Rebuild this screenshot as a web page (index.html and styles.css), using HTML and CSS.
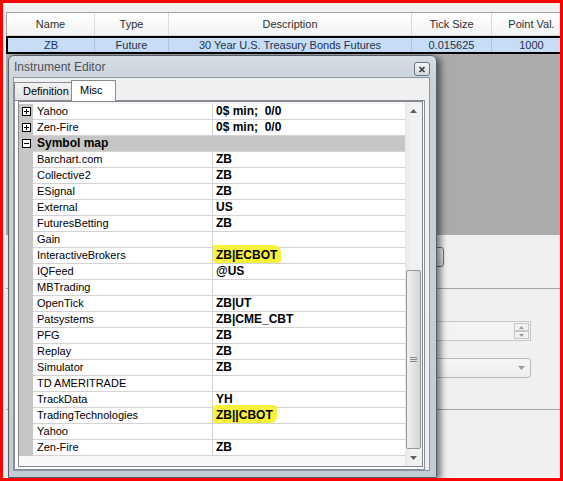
FILE: index.html
```html
<!DOCTYPE html>
<html>
<head>
<meta charset="utf-8">
<link rel="stylesheet" href="styles.css">
</head>
<body>
<div class="screen">
  <div class="list">
    <div class="lrow head">
      <div class="c c1">Name</div><div class="c c2">Type</div><div class="c c3">Description</div><div class="c c4">Tick Size</div><div class="c c5">Point Val.</div>
    </div>
    <div class="lrow sel">
      <div class="c c1">ZB</div><div class="c c2">Future</div><div class="c c3">30 Year U.S. Treasury Bonds Futures</div><div class="c c4">0.015625</div><div class="c c5">1000</div>
    </div>
  </div>
  <div class="gray"></div>
  <div class="lower">
    <div class="btn"></div>
    <div class="sep"></div>
    <div class="spin">
      <div class="spin-btns">
        <span class="sb"><svg width="5" height="3" viewBox="0 0 5 3"><polygon points="0,3 2.5,0 5,3" fill="#9a9a9a"/></svg></span>
        <span class="sb"><svg width="5" height="3" viewBox="0 0 5 3"><polygon points="0,0 2.5,3 5,0" fill="#9a9a9a"/></svg></span>
      </div>
    </div>
    <div class="combo"><svg width="7" height="4" viewBox="0 0 7 4"><polygon points="0,0 3.5,4 7,0" fill="#9c9c9c"/></svg></div>
    <div class="sep sep2"></div>
  </div>

  <div class="dialog">
    <div class="titlebar">
      <span class="title">Instrument Editor</span>
      <span class="close"><svg width="8" height="7" viewBox="0 0 8 7"><path d="M1.5 1 L6.5 6 M6.5 1 L1.5 6" stroke="#3a3a3a" stroke-width="1.6"/></svg></span>
    </div>
    <div class="client">
      <div class="tabs">
        <div class="tab">Definition</div>
        <div class="tab active">Misc</div>
      </div>
      <div class="panel">
        <div class="pgrid">
          <div class="rows">
            <div class="prow"><div class="gut"><svg class="exp" width="9" height="9" viewBox="0 0 9 9"><rect x="0.5" y="0.5" width="8" height="8" fill="#fff" stroke="#000"/><path d="M2 4.5h5M4.5 2v5" stroke="#000"/></svg></div><div class="cells"><div class="lab">Yahoo</div><div class="val">0$ min;&nbsp; 0/0</div></div></div>
            <div class="prow"><div class="gut"><svg class="exp" width="9" height="9" viewBox="0 0 9 9"><rect x="0.5" y="0.5" width="8" height="8" fill="#fff" stroke="#000"/><path d="M2 4.5h5M4.5 2v5" stroke="#000"/></svg></div><div class="cells"><div class="lab">Zen-Fire</div><div class="val">0$ min;&nbsp; 0/0</div></div></div>
            <div class="prow cat"><div class="gut"><svg class="exp" width="9" height="9" viewBox="0 0 9 9"><rect x="0.5" y="0.5" width="8" height="8" fill="#fff" stroke="#000"/><path d="M2 4.5h5" stroke="#000"/></svg></div><div class="cells"><div class="catlab">Symbol map</div></div></div>
            <div class="prow"><div class="gut"></div><div class="cells"><div class="lab">Barchart.com</div><div class="val">ZB</div></div></div>
            <div class="prow"><div class="gut"></div><div class="cells"><div class="lab">Collective2</div><div class="val">ZB</div></div></div>
            <div class="prow"><div class="gut"></div><div class="cells"><div class="lab">ESignal</div><div class="val">ZB</div></div></div>
            <div class="prow"><div class="gut"></div><div class="cells"><div class="lab">External</div><div class="val">US</div></div></div>
            <div class="prow"><div class="gut"></div><div class="cells"><div class="lab">FuturesBetting</div><div class="val">ZB</div></div></div>
            <div class="prow"><div class="gut"></div><div class="cells"><div class="lab">Gain</div><div class="val"></div></div></div>
            <div class="prow"><div class="gut"></div><div class="cells"><div class="lab">InteractiveBrokers</div><div class="val"><span class="hl hl1">ZB|ECBOT</span></div></div></div>
            <div class="prow"><div class="gut"></div><div class="cells"><div class="lab">IQFeed</div><div class="val">@US</div></div></div>
            <div class="prow"><div class="gut"></div><div class="cells"><div class="lab">MBTrading</div><div class="val"></div></div></div>
            <div class="prow"><div class="gut"></div><div class="cells"><div class="lab">OpenTick</div><div class="val">ZB|UT</div></div></div>
            <div class="prow"><div class="gut"></div><div class="cells"><div class="lab">Patsystems</div><div class="val">ZB|CME_CBT</div></div></div>
            <div class="prow"><div class="gut"></div><div class="cells"><div class="lab">PFG</div><div class="val">ZB</div></div></div>
            <div class="prow"><div class="gut"></div><div class="cells"><div class="lab">Replay</div><div class="val">ZB</div></div></div>
            <div class="prow"><div class="gut"></div><div class="cells"><div class="lab">Simulator</div><div class="val">ZB</div></div></div>
            <div class="prow"><div class="gut"></div><div class="cells"><div class="lab">TD AMERITRADE</div><div class="val"></div></div></div>
            <div class="prow"><div class="gut"></div><div class="cells"><div class="lab">TrackData</div><div class="val">YH</div></div></div>
            <div class="prow"><div class="gut"></div><div class="cells"><div class="lab">TradingTechnologies</div><div class="val"><span class="hl hl2">ZB||CBOT</span></div></div></div>
            <div class="prow"><div class="gut"></div><div class="cells"><div class="lab">Yahoo</div><div class="val"></div></div></div>
            <div class="prow"><div class="gut"></div><div class="cells"><div class="lab">Zen-Fire</div><div class="val">ZB</div></div></div>
          </div>
          <div class="vscroll">
            <div class="arrow"><svg width="7" height="4" viewBox="0 0 7 4"><polygon points="0,4 3.5,0 7,4" fill="#606060"/></svg></div>
            <div class="track">
              <div class="thumb"><svg width="7" height="7" viewBox="0 0 7 7"><path d="M0 1.5h7M0 3.5h7M0 5.5h7" stroke="#8a8a8a" stroke-width="1"/></svg></div>
            </div>
            <div class="arrow"><svg width="7" height="4" viewBox="0 0 7 4"><polygon points="0,0 3.5,4 7,0" fill="#606060"/></svg></div>
          </div>
        </div>
      </div>
    </div>
  </div>
</div>
</body>
</html>
```

FILE: styles.css
```css
* { box-sizing: border-box; }

body {
  margin: 0;
  font-family: "Liberation Sans", Arial, sans-serif;
}

.screen {
  position: relative;
  width: 563px;
  height: 481px;
  border: 3px solid #ff0000;
  background: #f0f0f0;
  overflow: hidden;
  padding-top: 9px;
}

/* ---------- background list ---------- */
.list {
  margin-left: 3px;
  margin-right: -14px;
}

.lrow {
  display: flex;
  font-size: 11px;
  white-space: nowrap;
}

.head {
  height: 24px;
  border-top: 1px solid #a3a3a3;
  border-left: 1px solid #a3a3a3;
  border-bottom: 1px solid #d5d5d5;
  background: linear-gradient(#ffffff, #f2f3f5);
  color: #2e2e2e;
}

.head .c {
  line-height: 22px;
  text-align: center;
  border-right: 1px solid #dcdcdc;
}

.sel {
  height: 18px;
  border: 2px solid #000;
  background: #c7ddf5;
  color: #1d3050;
}

.sel .c {
  line-height: 14px;
  text-align: center;
  border-right: 1px solid #aac6e6;
}

.c1 { width: 88px; }
.sel .c1 { width: 87px; }
.c2 { width: 74px; }
.c3 { width: 243px; }
.c4 { width: 80px; }
.c5 { width: 80px; }

.gray {
  height: 181px;
  margin-left: 3px;
  background: #ababab;
}

.lower {
  padding-top: 12px;
}

.btn {
  margin-left: 361px;
  width: 80px;
  height: 20px;
  border: 1px solid #707070;
  border-radius: 3px;
  background: linear-gradient(#f5f5f5, #dddddd);
}

.sep {
  margin-top: 21px;
  margin-left: 3px;
  height: 1px;
  background: #a5a5a5;
}

.sep2 { margin-top: 31px; }

.spin {
  margin-top: 32px;
  margin-left: 328px;
  width: 200px;
  height: 20px;
  border: 1px solid #c6c6c6;
  background: #f3f3f3;
  display: flex;
  justify-content: flex-end;
  padding: 1px;
}

.spin-btns {
  width: 15px;
  display: flex;
  flex-direction: column;
}

.sb {
  flex: 1;
  border: 1px solid #c6c6c6;
  background: #f1f1f1;
  display: flex;
  align-items: center;
  justify-content: center;
}

.combo {
  margin-top: 17px;
  margin-left: 328px;
  width: 200px;
  height: 20px;
  border: 1px solid #b9b9b9;
  border-radius: 3px;
  background: linear-gradient(#f6f6f6, #ededed);
  display: flex;
  align-items: center;
  justify-content: flex-end;
  padding-right: 5px;
}

/* ---------- dialog window ---------- */
.dialog {
  position: absolute;
  left: 5px;
  top: 52px;
  width: 429px;
  height: 423px;
  border: 1px solid #56606c;
  border-radius: 6px 6px 0 0;
  background: linear-gradient(to bottom, #d6dce3 0, #c9d1da 30px, #c3ccd6 100%);
  padding: 0 6px 6px 4px;
  display: flex;
  flex-direction: column;
  box-shadow: 4px 2px 6px rgba(0, 0, 0, 0.5);
}

.titlebar {
  height: 21px;
  display: flex;
  justify-content: space-between;
}

.title {
  margin-left: 1px;
  line-height: 22px;
  font-size: 12px;
  color: #4c5157;
}

.close {
  margin-top: 6px;
  width: 16px;
  height: 14px;
  border: 1px solid #6b7683;
  border-radius: 3px;
  background: linear-gradient(#f5f7f9, #d4dae1);
  display: flex;
  align-items: center;
  justify-content: center;
}

.client {
  flex: 1;
  border: 1px solid #8995a2;
  background: #f0f0f0;
  padding: 2px 4px 0 0;
  display: flex;
  flex-direction: column;
}

.tabs {
  display: flex;
  align-items: flex-end;
  height: 20px;
  font-size: 11px;
  color: #000;
}

.tab {
  height: 18px;
  line-height: 17px;
  padding: 0 0 0 8px;
  border: 1px solid #898c95;
  border-bottom: none;
  background: linear-gradient(#f3f3f3, #e3e3e3);
  width: 58px;
  white-space: nowrap;
}

.tab.active {
  height: 21px;
  width: 45px;
  line-height: 19px;
  margin-bottom: -1px;
  margin-left: -1px;
  padding-left: 8px;
  background: #ffffff;
  position: relative;
  z-index: 1;
}

.panel {
  flex: 1;
  border: 1px solid #898c95;
  background: #ffffff;
  padding: 0 1px 2px 3px;
  display: flex;
}

.pgrid {
  flex: 1;
  border: 1px solid #828790;
  display: flex;
  background: #f7f7f7;
}

.rows {
  width: 386px;
  padding-top: 2px;
}

.prow {
  display: flex;
  height: 16px;
}

.gut {
  width: 14px;
  background: #c6c6c6;
  display: flex;
  align-items: center;
  padding-left: 3px;
  padding-bottom: 1px;
}

.exp { display: block; }

.cells {
  flex: 1;
  display: flex;
  border-bottom: 1px solid #d3d3d3;
  background: #ffffff;
  line-height: 15px;
  white-space: nowrap;
}

.lab {
  width: 180px;
  padding-left: 4px;
  border-right: 1px solid #d3d3d3;
  font-size: 11px;
  color: #000;
}

.val {
  flex: 1;
  padding-left: 3px;
  font-size: 12px;
  font-weight: bold;
  color: #000;
}

.cat .cells {
  background: #c6c6c6;
}

.catlab {
  padding-left: 4px;
  font-size: 12px;
  font-weight: bold;
  color: #000;
}

.hl {
  background: #f8f33a;
  padding: 3px 4px 1px 3px;
  margin: 0 -4px 0 -3px;
  border-radius: 2px 7px 3px 3px;
}

.hl2 {
  border-radius: 3px 4px 6px 2px;
}

/* ---------- scrollbar ---------- */
.vscroll {
  width: 17px;
  display: flex;
  flex-direction: column;
  background: linear-gradient(to right, #e9e9e9, #f2f2f2 40%, #f0f0f0);
}

.arrow {
  height: 17px;
  display: flex;
  align-items: center;
  justify-content: center;
}

.track {
  flex: 1;
  padding: 151px 1px 0 1px;
  display: flex;
}

.thumb {
  flex: 1;
  border: 1px solid #979797;
  border-radius: 2px;
  background: linear-gradient(to right, #f1f1f1, #e2e2e2 55%, #d2d2d2);
  display: flex;
  align-items: center;
  justify-content: center;
}
```
